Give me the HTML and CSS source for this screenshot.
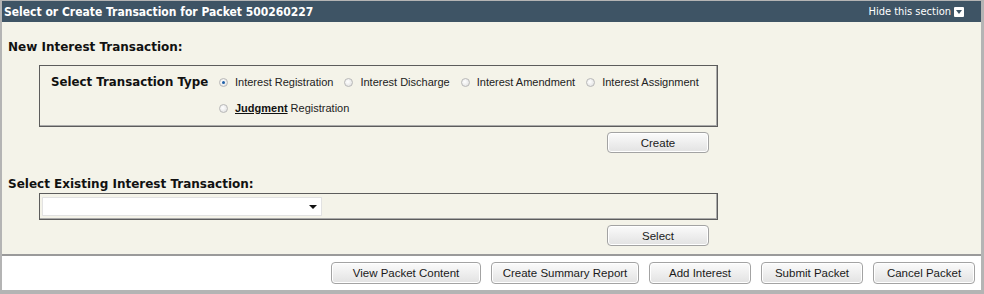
FILE: index.html
```html
<!DOCTYPE html>
<html lang="en">
<head>
  <meta charset="UTF-8">
  <title>Select or Create Transaction</title>
  <link rel="stylesheet" href="styles.css">
</head>
<body>
  <div class="panel">
    <div class="panel-header">
      <span class="panel-title">Select or Create Transaction for Packet 500260227</span>
      <a href="#" class="hide-link">Hide this section <span class="hide-icon"></span></a>
    </div>

    <div class="panel-body">
      <h3 class="section-title">New Interest Transaction:</h3>
      <div class="type-box">
        <div class="type-label">Select Transaction Type</div>
        <div class="type-options">
          <div class="option-row">
            <label class="option"><span class="radio checked"></span><span>Interest Registration</span></label>
            <label class="option"><span class="radio"></span><span>Interest Discharge</span></label>
            <label class="option"><span class="radio"></span><span>Interest Amendment</span></label>
            <label class="option"><span class="radio"></span><span>Interest Assignment</span></label>
          </div>
          <div class="option-row">
            <label class="option"><span class="radio"></span><span><b class="term">Judgment</b> Registration</span></label>
          </div>
        </div>
      </div>
      <div class="action-row">
        <button class="btn">Create</button>
      </div>

      <h3 class="section-title existing">Select Existing Interest Transaction:</h3>
      <div class="select-box">
        <div class="dropdown"><span class="caret"></span></div>
      </div>
      <div class="action-row">
        <button class="btn">Select</button>
      </div>
    </div>

    <div class="panel-footer">
      <button class="btn wide">View Packet Content</button>
      <button class="btn wide2">Create Summary Report</button>
      <button class="btn">Add Interest</button>
      <button class="btn">Submit Packet</button>
      <button class="btn">Cancel Packet</button>
    </div>
  </div>
</body>
</html>
```

FILE: styles.css
```css
* {
  box-sizing: border-box;
}

body {
  margin: 0;
  background: #b4b4b4;
  font-family: "Liberation Sans", Arial, sans-serif;
  font-size: 11px;
  color: #1a1a1a;
}

.panel {
  margin: 1px 3px 4px 2px;
  height: 289px;
  display: flex;
  flex-direction: column;
}

.panel-header {
  height: 21px;
  background: #3e5465;
  color: #fff;
  display: flex;
  align-items: center;
  justify-content: space-between;
  padding: 0 17px 0 2px;
}

.panel-title {
  font-family: "DejaVu Sans Condensed", "DejaVu Sans", sans-serif;
  font-weight: bold;
  font-size: 12px;
}

.hide-link {
  color: #fff;
  text-decoration: none;
  font-family: "DejaVu Sans Condensed", "DejaVu Sans", sans-serif;
  font-size: 11px;
  display: flex;
  align-items: center;
  gap: 3px;
}

.hide-icon {
  width: 10px;
  height: 10px;
  background: #fff;
  border-radius: 1px;
  position: relative;
}

.hide-icon::after {
  content: "";
  position: absolute;
  left: 2px;
  top: 3px;
  border-left: 3px solid transparent;
  border-right: 3px solid transparent;
  border-top: 4px solid #3e5465;
}

.panel-body {
  flex: 1;
  background: #f4f3e9;
  padding: 18px 0 0 6px;
}

.section-title {
  margin: 0;
  font-family: "DejaVu Sans", sans-serif;
  font-size: 12px;
  line-height: 14px;
  font-weight: bold;
  color: #111;
  white-space: nowrap;
}

.section-title.existing {
  margin-top: 24px;
}

.type-box {
  margin: 11px 0 0 31px;
  width: 679px;
  height: 62px;
  border: 1px solid #5c5c5c;
  box-shadow: inset -1px -1px 0 #aaa;
  display: flex;
  padding: 3px 0 0 11px;
}

.type-label {
  flex-shrink: 0;
  width: 167px;
  line-height: 26px;
  height: 26px;
  font-family: "DejaVu Sans", sans-serif;
  font-weight: bold;
  font-size: 11.8px;
  color: #111;
  white-space: nowrap;
}

.type-options {
  flex-shrink: 0;
}

.option-row {
  display: flex;
  height: 26px;
  align-items: center;
  gap: 10px;
}

.option {
  display: flex;
  align-items: center;
  gap: 7px;
  font-size: 11px;
  color: #222;
  white-space: nowrap;
}

.term {
  text-decoration: underline;
  color: #111;
}

.radio {
  flex-shrink: 0;
  margin-left: 1px;
  width: 9px;
  height: 9px;
  border-radius: 50%;
  border: 1px solid #b8b8b8;
  background: radial-gradient(circle at 40% 40%, #ffffff, #dcdcdc);
  position: relative;
}

.radio.checked::after {
  content: "";
  position: absolute;
  left: 2px;
  top: 2px;
  width: 3px;
  height: 3px;
  border-radius: 50%;
  background: #1d5fa8;
}

.action-row {
  display: flex;
  width: 701px;
  justify-content: flex-end;
  margin-top: 5px;
}

.btn {
  height: 21px;
  width: 102px;
  padding: 0;
  border: 1px solid #a3a3a3;
  border-radius: 4px;
  background: linear-gradient(#fbfbfb, #e2e2e2);
  box-shadow: inset 0 0 0 1px #fff;
  font-family: "Liberation Sans", Arial, sans-serif;
  font-size: 11.5px;
  color: #1a1a1a;
}

.select-box {
  margin: 2px 0 0 31px;
  width: 679px;
  height: 27px;
  border: 1px solid #5c5c5c;
  box-shadow: inset -1px -1px 0 #aaa;
  padding: 3px 0 0 2px;
}

.dropdown {
  width: 280px;
  height: 19px;
  background: #fff;
  border: 1px solid #e2e2e2;
  position: relative;
}

.caret {
  position: absolute;
  right: 4px;
  top: 7px;
  border-left: 4px solid transparent;
  border-right: 4px solid transparent;
  border-top: 4px solid #111;
}

.panel-footer {
  height: 36px;
  background: #fff;
  border-top: 2px solid #9a9a9a;
  display: flex;
  justify-content: flex-end;
  gap: 10px;
  padding: 6px 6px 0 0;
}

.panel-footer .btn {
  height: 22px;
}

.panel-footer .btn.wide {
  width: 150px;
}

.panel-footer .btn.wide2 {
  width: 148px;
}
```
